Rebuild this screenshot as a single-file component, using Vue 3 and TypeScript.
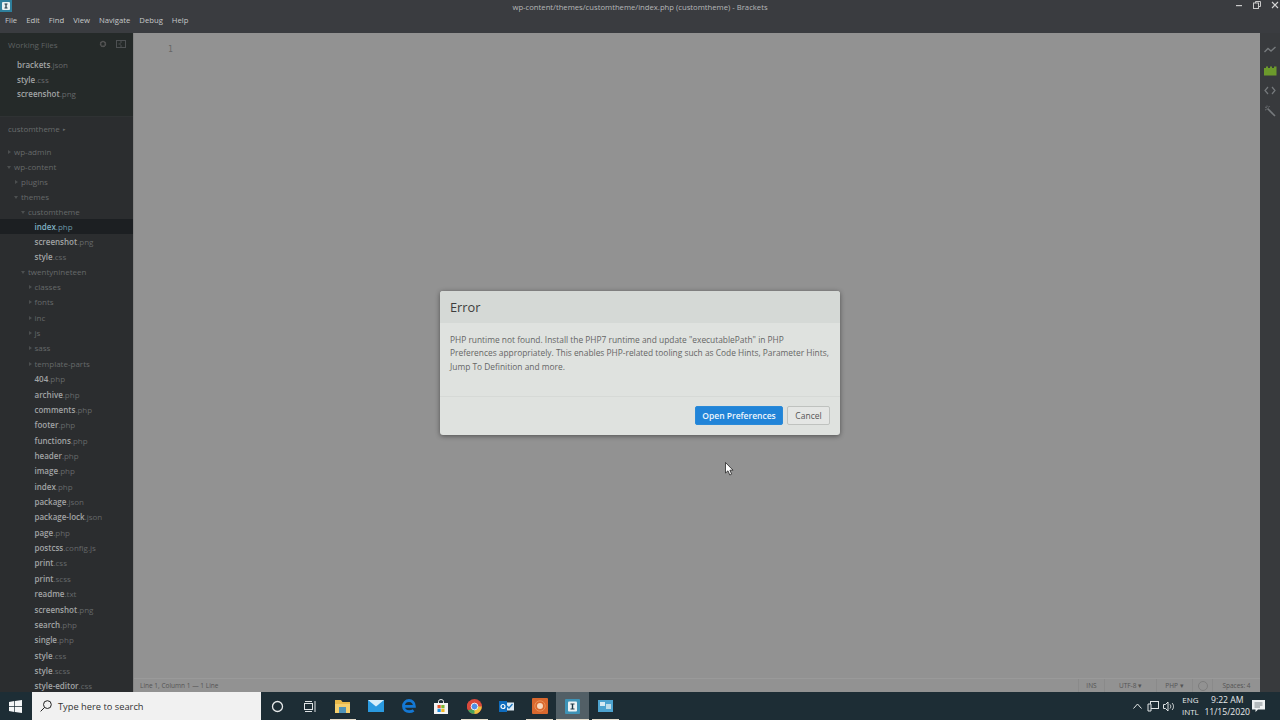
<script setup lang="ts">
interface TreeRow {
  name: string
  ext?: string
  depth: number
  arrow?: 'open' | 'closed'
  selected?: boolean
}

const menus = ['File', 'Edit', 'Find', 'View', 'Navigate', 'Debug', 'Help']

const workingFiles = [
  { name: 'brackets', ext: '.json' },
  { name: 'style', ext: '.css' },
  { name: 'screenshot', ext: '.png' },
]

const dir = (name: string, depth: number, open = false): TreeRow => ({
  name,
  depth,
  arrow: open ? 'open' : 'closed',
})
const file = (name: string, ext: string, selected = false): TreeRow => ({ name, ext, depth: 3, selected })

const tree: TreeRow[] = [
  dir('wp-admin', 0),
  dir('wp-content', 0, true),
  dir('plugins', 1),
  dir('themes', 1, true),
  dir('customtheme', 2, true),
  file('index', '.php', true),
  file('screenshot', '.png'),
  file('style', '.css'),
  dir('twentynineteen', 2, true),
  dir('classes', 3),
  dir('fonts', 3),
  dir('inc', 3),
  dir('js', 3),
  dir('sass', 3),
  dir('template-parts', 3),
  file('404', '.php'),
  file('archive', '.php'),
  file('comments', '.php'),
  file('footer', '.php'),
  file('functions', '.php'),
  file('header', '.php'),
  file('image', '.php'),
  file('index', '.php'),
  file('package', '.json'),
  file('package-lock', '.json'),
  file('page', '.php'),
  file('postcss', '.config.js'),
  file('print', '.css'),
  file('print', '.scss'),
  file('readme', '.txt'),
  file('screenshot', '.png'),
  file('search', '.php'),
  file('single', '.php'),
  file('style', '.css'),
  file('style', '.scss'),
  file('style-editor', '.css'),
]
</script>

<template>
  <div class="app">
    <div class="chrome">
      <div class="titlebar">
        <svg class="app-icon" width="12" height="12" viewBox="0 0 12 12">
          <rect width="12" height="12" fill="#2f7f9c" />
          <rect x="2" y="2" width="8" height="8" rx="1" fill="#e8f0f2" />
          <path d="M4.5 3.5H7.5V4.5H6.6V7.5H7.5V8.5H4.5V7.5H5.4V4.5H4.5Z" fill="#1c3440" />
        </svg>
        <span class="title">wp-content/themes/customtheme/index.php (customtheme) - Brackets</span>
        <div class="win-controls">
          <svg width="8" height="8" viewBox="0 0 8 8"><rect x="1" y="4" width="6" height="1.2" fill="#c9c9c9" /></svg>
          <svg width="8" height="8" viewBox="0 0 8 8" fill="none" stroke="#c9c9c9"><rect x="0.5" y="2" width="5" height="5.5" /><path d="M2.5 2V0.5H7.5V5.5H5.5" /></svg>
          <svg width="8" height="8" viewBox="0 0 8 8" stroke="#d4d4d4" stroke-width="1.1"><path d="M1 1L7 7M7 1L1 7" /></svg>
        </div>
      </div>
      <nav class="menubar">
        <span v-for="m in menus" :key="m">{{ m }}</span>
      </nav>
    </div>

    <div class="main">
      <aside class="sidebar">
        <section class="working">
          <header class="working-head">
            <span>Working Files</span>
            <div class="working-tools">
              <svg width="8" height="8" viewBox="0 0 8 8"><circle cx="4" cy="4" r="2.4" fill="none" stroke="#555" stroke-width="1.6" stroke-dasharray="1.3 0.6" /><circle cx="4" cy="4" r="2.6" fill="none" stroke="#555" stroke-width="0.9" /></svg>
              <svg width="10" height="8" viewBox="0 0 10 8" fill="none" stroke="#4e5153"><rect x="0.5" y="0.5" width="9" height="7" /><path d="M5 .5V3M5 5V7.5M2.5 4H5" /></svg>
            </div>
          </header>
          <ul class="working-list">
            <li v-for="f in workingFiles" :key="f.name"><b>{{ f.name }}</b><i>{{ f.ext }}</i></li>
          </ul>
        </section>

        <div class="project">customtheme<em>▸</em></div>

        <ul class="tree">
          <li
            v-for="(row, i) in tree"
            :key="i"
            class="row"
            :class="[`depth-${row.depth}`, { selected: row.selected, folder: row.arrow }]"
          >
            <span v-if="row.arrow" class="arrow" :class="row.arrow"></span>
            <template v-if="row.ext"><b>{{ row.name }}</b><i>{{ row.ext }}</i></template>
            <template v-else>{{ row.name }}</template>
          </li>
        </ul>
      </aside>

      <div class="editor-col">
        <div class="editor"><span class="gutter">1</span></div>
        <footer class="statusbar">
          <span class="cursor-pos">Line 1, Column 1 — 1 Line</span>
          <div class="status-right">
            <span class="cell ins">INS</span>
            <span class="cell enc">UTF-8 ▾</span>
            <span class="cell lang">PHP ▾</span>
            <span class="cell lint"><i class="ring"></i></span>
            <span class="cell spaces">Spaces: 4</span>
          </div>
        </footer>
      </div>

      <div class="toolbar">
        <svg width="12" height="10" viewBox="0 0 12 10" fill="none" stroke="#767a7d" stroke-width="1.4"><path d="M0.5 7L4 3.5L7 6L11.5 2" /></svg>
        <svg width="13" height="11" viewBox="0 0 13 11"><path d="M0 3H2V1.5H4V3H6V1.5H8V3H10V1.5H12.5V10.5H0Z" fill="#6c9a2c" /></svg>
        <svg width="12" height="9" viewBox="0 0 12 9" fill="none" stroke="#767a7d" stroke-width="1.2"><path d="M4 1L1 4.5L4 8M8 1L11 4.5L8 8" /></svg>
        <svg width="12" height="12" viewBox="0 0 12 12" fill="none" stroke="#767a7d" stroke-width="1.6"><path d="M3.5 3.5L11 11" /><path d="M1 2L3 3M3 0.5V2M5.5 1L4.5 2.5M1 5L2.5 4.5" stroke-width="0.8" /></svg>
      </div>
    </div>

    <div class="taskbar">
      <div class="start">
        <svg width="13" height="13" viewBox="0 0 13 13" fill="#f4f6f7"><path d="M0 1.9L5.3 1.1V6.2H0ZM6 1L13 0V6.2H6ZM0 6.9H5.3V11.9L0 11.1ZM6 6.9H13V13L6 12Z" /></svg>
      </div>
      <div class="search">
        <svg width="12" height="12" viewBox="0 0 12 12" fill="none" stroke="#222" stroke-width="1"><circle cx="7.4" cy="4.6" r="3.9" /><path d="M4.6 7.4L0.6 11.4" /></svg>
        <span>Type here to search</span>
      </div>
      <div class="tasks">
        <div class="task">
          <svg width="13" height="13" viewBox="0 0 13 13" fill="none" stroke="#e6e9ea" stroke-width="1.3"><circle cx="6.5" cy="6.5" r="5" /></svg>
        </div>
        <div class="task">
          <svg width="12" height="11" viewBox="0 0 12 11" fill="none" stroke="#dfe3e5"><rect x="0.5" y="2.5" width="8" height="6" /><path d="M1 .5H8M1 10.5H8M11 0V11" /></svg>
        </div>
        <div class="task on">
          <svg width="15" height="13" viewBox="0 0 15 13"><path d="M0 0H6L7.5 2H15V13H0Z" fill="#e9b94a" /><rect y="4" width="15" height="9" fill="#f4cf6e" /><rect x="4" y="7" width="7" height="6" fill="#4f93b8" /></svg>
        </div>
        <div class="task">
          <svg width="16" height="12" viewBox="0 0 16 12"><rect width="16" height="12" fill="#2a9ae0" /><path d="M0 0L8 6.5L16 0Z" fill="#d6eefa" /></svg>
        </div>
        <div class="task">
          <svg width="14" height="14" viewBox="0 0 14 14" fill="none" stroke="#1478d4" stroke-width="2.8"><path d="M2 7.4H12.4C12.4 3.4 9.8 1.5 7 1.5C3.8 1.5 1.5 4 1.5 7.2C1.5 10.6 4 12.6 7.2 12.6C9 12.6 10.5 12.1 11.6 11.3" /></svg>
        </div>
        <div class="task">
          <svg width="14" height="15" viewBox="0 0 14 15"><path d="M4.5 4V2.5a2.5 2 0 0 1 5 0V4" fill="none" stroke="#eee" /><rect y="4" width="14" height="11" fill="#f3f3f3" /><rect x="3.5" y="6" width="3.2" height="3.2" fill="#e8552c" /><rect x="7.3" y="6" width="3.2" height="3.2" fill="#7cb82f" /><rect x="3.5" y="9.8" width="3.2" height="3.2" fill="#1f8fe0" /><rect x="7.3" y="9.8" width="3.2" height="3.2" fill="#f5b81f" /></svg>
        </div>
        <div class="task on">
          <svg width="15" height="15" viewBox="0 0 16 16"><circle cx="8" cy="8" r="8" fill="#d9493c" /><path d="M8 8L1.1 12A8 8 0 0 1 2 2.7Z" fill="#d9493c" /><path d="M1.1 12A8 8 0 0 0 8 16L11 9Z" fill="#4aa35a" /><path d="M8 8H15.8A8 8 0 0 1 8 16Z" fill="#eec23e" /><circle cx="8" cy="8" r="3.6" fill="#4f8fe6" stroke="#f2f2f2" /></svg>
        </div>
        <div class="task">
          <svg width="15" height="13" viewBox="0 0 15 13"><rect x="6" y="2.5" width="9" height="8" fill="#dce9f3" /><path d="M8 6L10 8L13.5 4" fill="none" stroke="#1b76bd" stroke-width="1.3" /><rect y="1" width="8" height="11" fill="#0f6cbd" /><circle cx="4" cy="6.5" r="2" fill="none" stroke="#fff" stroke-width="1.2" /></svg>
        </div>
        <div class="task on">
          <svg width="16" height="16" viewBox="0 0 16 16"><rect width="16" height="16" rx="1" fill="#d9682e" /><circle cx="8" cy="8" r="3" fill="#f7d9bf" /><circle cx="8" cy="8" r="5.2" fill="none" stroke="#e99257" /></svg>
        </div>
        <div class="task on active">
          <svg width="15" height="15" viewBox="0 0 15 15"><rect width="15" height="15" rx="1" fill="#3e93b6" /><rect x="3" y="2.5" width="9" height="10" rx="1" fill="#eef3f4" /><path d="M5.5 4.5H9.5V5.5H8.2V9.5H9.5V10.5H5.5V9.5H6.8V5.5H5.5Z" fill="#1d3a48" /></svg>
        </div>
        <div class="task on">
          <svg width="15" height="12" viewBox="0 0 15 12"><rect width="15" height="12" fill="#4da3cf" /><rect x="2" y="2" width="5" height="4" fill="#d5eaf3" /><rect x="8" y="4" width="5" height="5" fill="#bcdcea" /></svg>
        </div>
      </div>
      <div class="tray">
        <svg class="caret" width="9" height="6" viewBox="0 0 9 6" fill="none" stroke="#e4e7e8"><path d="M0.5 5.5L4.5 1L8.5 5.5" /></svg>
        <svg class="net" width="12" height="12" viewBox="0 0 12 12" fill="none" stroke="#dfe3e4"><rect x="3.5" y="1.5" width="8" height="7" /><path d="M1 4H4V11H1Z" fill="#20303a" /></svg>
        <svg class="vol" width="12" height="11" viewBox="0 0 12 11" fill="none" stroke="#dfe3e4"><path d="M0.5 3.5H2.5L5 1V10L2.5 7.5H0.5Z" /><path d="M7 3.5C8 4.5 8 6.5 7 7.5M9 2C11 4 11 7 9 9" /></svg>
        <div class="lang-box"><span>ENG</span><span>INTL</span></div>
        <div class="clock"><span>9:22 AM</span><span>11/15/2020</span></div>
        <svg class="notify" width="13" height="12" viewBox="0 0 13 12"><path d="M0 0H13V9.5H6L3.5 12V9.5H0Z" fill="#eef1f2" /><path d="M2.5 3H10.5M2.5 5H10.5M2.5 7H8" stroke="#5d6a70" stroke-width="0.8" /></svg>
      </div>
    </div>

    <div class="dialog">
      <div class="dialog-head">Error</div>
      <div class="dialog-body">
        PHP runtime not found. Install the PHP7 runtime and update "executablePath" in PHP Preferences appropriately. This enables PHP-related tooling such as Code Hints, Parameter Hints, Jump To Definition and more.
      </div>
      <div class="dialog-foot">
        <button class="btn primary">Open Preferences</button>
        <button class="btn">Cancel</button>
      </div>
    </div>

    <svg class="pointer" width="9" height="14" viewBox="0 0 9 14">
      <path d="M0.5 0.5V11L3 8.8L4.8 13L6.6 12.2L4.9 8.2H8Z" fill="#fff" stroke="#111" stroke-width="0.7" />
    </svg>
  </div>
</template>

<style>
html,
body {
  margin: 0;
  background: #929292;
}
</style>

<style scoped>
.app {
  position: relative;
  width: 1280px;
  height: 720px;
  display: flex;
  flex-direction: column;
  overflow: hidden;
  font-family: "Open Sans", "Liberation Sans", sans-serif;
}

ul {
  list-style: none;
  margin: 0;
  padding: 0;
}

b {
  font-weight: 600;
  color: #a2a4a5;
}

i {
  font-style: normal;
  color: #65686a;
}

/* window chrome */
.chrome {
  height: 33px;
  flex-shrink: 0;
  background: #3a3c40;
}

.titlebar {
  position: relative;
  height: 14px;
  display: flex;
  align-items: center;
  justify-content: center;
}

.app-icon {
  position: absolute;
  left: 0;
  top: 0;
}

.title {
  font-size: 7.7px;
  color: #b5b7b8;
  line-height: 14px;
}

.win-controls {
  position: absolute;
  right: 1px;
  top: 1px;
  display: flex;
  gap: 10px;
}

.menubar {
  display: flex;
  gap: 9px;
  padding: 0 0 0 5px;
  font-size: 7.7px;
  line-height: 12px;
  color: #c6c8c9;
}

.main {
  flex: 1;
  display: flex;
  min-height: 0;
}

/* sidebar */
.sidebar {
  width: 133px;
  flex-shrink: 0;
  background: #2b2d2f;
  overflow: hidden;
  font-size: 8px;
}

.working {
  height: 84px;
  background: #252a29;
  padding-top: 6px;
  box-sizing: border-box;
  border-bottom: 1px solid #2f3233;
}

.working-head {
  display: flex;
  justify-content: space-between;
  align-items: center;
  padding: 0 7px 0 8px;
  height: 10px;
  color: #5f6263;
}

.working-tools {
  display: flex;
  gap: 9px;
  align-items: center;
}

.working-list {
  margin-top: 9px;
  padding-left: 17px;
}

.working-list li {
  height: 14.7px;
  line-height: 14.7px;
}

.project {
  padding: 4px 0 0 8px;
  height: 16px;
  line-height: 16px;
  color: #696c6d;
}

.project em {
  font-style: normal;
  font-size: 5px;
  margin-left: 3px;
  vertical-align: 1px;
}

.tree {
  margin-top: 7px;
}

.row {
  position: relative;
  height: 15.36px;
  line-height: 15.36px;
  white-space: nowrap;
  color: #66696a;
}

.row:nth-child(-n + 9) {
  height: 15px;
  line-height: 15px;
}

.depth-0 { padding-left: 14px; }
.depth-1 { padding-left: 21px; }
.depth-2 { padding-left: 28px; }
.depth-3 { padding-left: 34.5px; }

.selected {
  background: #1c1f22;
}

.selected b {
  color: #7fb0c2;
}

.selected i {
  color: #6b97a8;
}

.arrow {
  position: absolute;
  top: 6px;
  margin-left: -6px;
  width: 0;
  height: 0;
}

.arrow.closed {
  border-left: 3px solid #4c4f50;
  border-top: 2px solid transparent;
  border-bottom: 2px solid transparent;
}

.arrow.open {
  margin-left: -7px;
  top: 7px;
  border-top: 3px solid #4c4f50;
  border-left: 2px solid transparent;
  border-right: 2px solid transparent;
}

/* editor */
.editor-col {
  flex: 1;
  display: flex;
  flex-direction: column;
  min-width: 0;
  background: #929292;
  border-left: 1px solid #858585;
}

.editor {
  flex: 1;
  padding-top: 2px;
  padding-left: 34px;
}

.gutter {
  font-family: "DejaVu Sans Mono", "Liberation Mono", monospace;
  font-size: 8px;
  line-height: 10px;
  color: #666;
}

.statusbar {
  height: 14px;
  flex-shrink: 0;
  display: flex;
  justify-content: space-between;
  align-items: center;
  padding-left: 6px;
  border-top: 1px solid #9a9a9a;
  box-sizing: border-box;
  font-size: 6.5px;
  color: #555;
}

.status-right {
  display: flex;
  height: 100%;
}

.cell {
  display: flex;
  align-items: center;
  justify-content: center;
  border-left: 1px solid #8a8a8a;
  box-sizing: border-box;
}

.ins { width: 26px; }
.enc { width: 52px; }
.lang { width: 36px; }
.lint { width: 20px; }
.spaces { width: 48px; }

.ring {
  width: 8px;
  height: 8px;
  border: 1px solid #7d7d7d;
  border-radius: 50%;
}

.toolbar {
  width: 20px;
  flex-shrink: 0;
  background: #383a3d;
  display: flex;
  flex-direction: column;
  align-items: center;
  gap: 10px;
  padding-top: 12px;
  box-sizing: border-box;
}

/* taskbar */
.taskbar {
  height: 28px;
  flex-shrink: 0;
  display: flex;
  background: #1d2d35;
}

.start {
  width: 31px;
  margin-right: 1px;
  box-sizing: border-box;
  display: flex;
  align-items: center;
  justify-content: center;
}

.search {
  width: 229px;
  background: #f1f1f1;
  display: flex;
  align-items: center;
  gap: 6px;
  padding-left: 8px;
  box-sizing: border-box;
  font-size: 9.3px;
  color: #333;
}

.tasks {
  display: flex;
  flex: 1;
}

.task {
  position: relative;
  width: 32.8px;
  height: 28px;
  display: flex;
  align-items: center;
  justify-content: center;
}

.task.on::after {
  content: "";
  position: absolute;
  left: 3px;
  right: 3px;
  bottom: 0;
  height: 1px;
  background: #e4dccb;
}

.task.active {
  background: #525f66;
}

.task.active::after {
  left: 0;
  right: 0;
}

.tray {
  display: flex;
  align-items: center;
  padding-right: 15px;
  color: #e6e9ea;
  font-size: 8.6px;
  line-height: 12px;
}

.caret { margin-right: 5px; }
.net { margin-right: 4px; }
.vol { margin-right: 6px; }

.lang-box,
.clock {
  display: flex;
  flex-direction: column;
  align-items: center;
}

.lang-box {
  font-size: 8px;
  width: 18px;
}

.clock {
  margin-left: 5px;
}

.notify {
  margin-left: 2px;
}

/* dialog */
.dialog {
  position: absolute;
  left: 440px;
  top: 291px;
  width: 400px;
  height: 144px;
  display: flex;
  flex-direction: column;
  background: #dfe2df;
  border-radius: 3px;
  overflow: hidden;
  box-shadow: 0 1px 5px rgba(0, 0, 0, 0.45);
}

.dialog-head {
  height: 32px;
  line-height: 33px;
  padding-left: 10px;
  background: #d5d9d6;
  font-size: 12.8px;
  color: #3d3d3d;
  flex-shrink: 0;
}

.dialog-body {
  height: 73px;
  padding: 10px 10px 0;
  box-sizing: border-box;
  font-size: 8.4px;
  line-height: 13.4px;
  color: #666;
  flex-shrink: 0;
}

.dialog-foot {
  flex: 1;
  display: flex;
  justify-content: flex-end;
  align-items: center;
  gap: 4px;
  padding: 0 10px 2px 0;
  border-top: 1px solid #d6d9d6;
}

.btn {
  height: 19px;
  width: 43px;
  padding: 0;
  font-family: inherit;
  font-size: 8.5px;
  color: #555;
  background: #e4e6e4;
  border: 1px solid #bfc2bf;
  border-radius: 2px;
}

.btn.primary {
  width: 88px;
  color: #eef6fc;
  font-weight: 600;
  background: #2184d8;
  border-color: #2a8ad8;
}

.pointer {
  position: absolute;
  left: 725px;
  top: 462px;
}
</style>
